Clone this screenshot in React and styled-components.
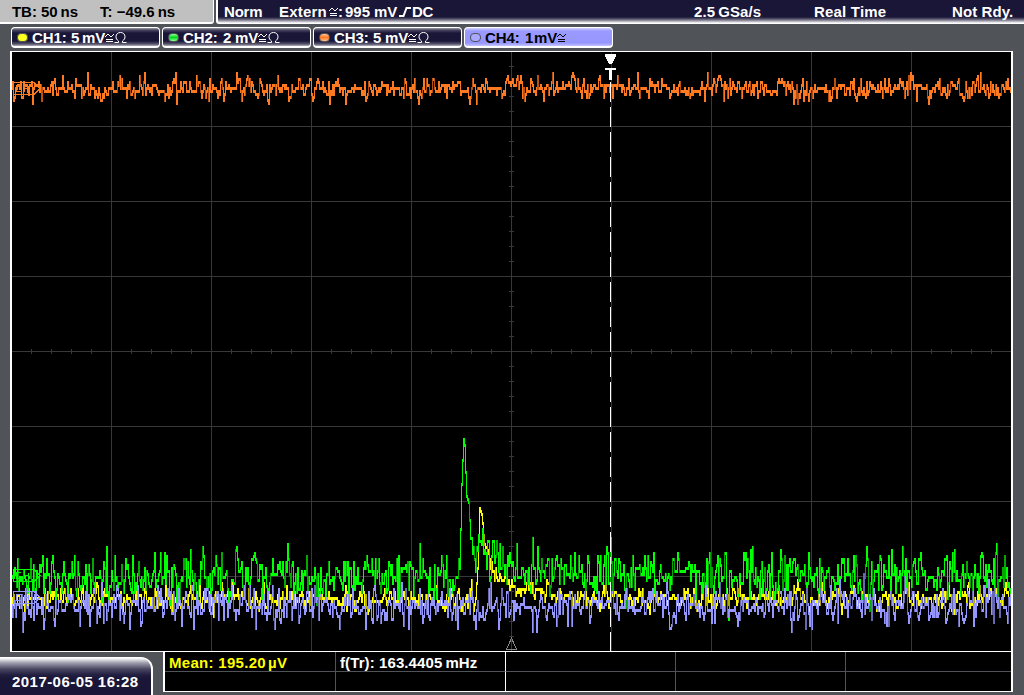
import React from 'react';
import styled, { createGlobalStyle } from 'styled-components';

const Global = createGlobalStyle`
  * { box-sizing: border-box; }
  html, body { margin: 0; padding: 0; background: #505357; overflow: hidden; }
`;

const Screen = styled.div`
  width: 1024px;
  height: 695px;
  display: flex;
  flex-direction: column;
  background: #505357;
  color: #fff;
  font: bold 15px/18px 'Liberation Sans', Arial, sans-serif;
  overflow: hidden;
`;

const TopBar = styled.header`
  display: flex;
  height: 24px;
  flex: none;
`;

const TimeBase = styled.div`
  width: 214px;
  margin-right: 2px;
  background: #c0c0c0;
  color: #000;
  border-right: 1px solid #fff;
  border-bottom: 2px solid #fff;
  border-radius: 0 0 3px 0;
  display: flex;
  padding: 3px 0 0 12px;
`;

const Status = styled.div`
  flex: 1;
  display: flex;
  padding: 3px 0 0 6px;
  border-left: 2px solid #fff;
  border-bottom: 1px solid #fff;
  border-radius: 0 0 0 3px;
  background: linear-gradient(#1a1638 0, #1a1638 17px, #55526a 19px, #a5a3b0 21px, #fff 23px);
`;

const Label = styled.span`
  display: block;
  flex: none;
  width: ${p => (p.$w ? `${p.$w}px` : 'auto')};
  letter-spacing: ${p => p.$ls || 0}px;
  white-space: pre;
`;

const Thin = styled.span`
  margin-left: ${p => p.$gap || 3}px;
`;

const Glyph = styled.svg`
  display: block;
  flex: none;
  margin-right: ${p => p.$gap || 0}px;
`;

const Channels = styled.nav`
  display: flex;
  gap: 2px;
  padding: 3px 0 0 11px;
  height: 27px;
  flex: none;
`;

const Channel = styled.div`
  width: 149px;
  height: 21px;
  display: flex;
  align-items: flex-start;
  padding: 1px 0 0 5px;
  border: 1px solid #fff;
  border-bottom-width: 2px;
  border-radius: 4px;
  color: ${p => (p.$active ? '#000' : '#fff')};
  background: ${p => (p.$active
    ? 'linear-gradient(#d2d2ff 0, #9a9aff 3px, #9696ff 15px, #c4c4ff 18px)'
    : 'linear-gradient(#a09fac 0, #4a4763 2px, #1a1638 5px, #1a1638 13px, #57546d 16px, #b5b3be 18px)')};
`;

const Dot = styled.i`
  width: 11px;
  height: 9px;
  margin: 4px 4px 0 0;
  border-radius: 4px;
  border: 1px solid #505357;
  background: ${p => p.$c};
`;

const Plot = styled.main`
  width: 1003px;
  height: 601px;
  margin-left: 10px;
  border: solid #fff;
  border-width: 1px 2px;
  background: #000;
  flex: none;
  svg { display: block; }
`;

const Footer = styled.footer`
  display: flex;
  height: 43px;
  flex: none;
`;

const Clock = styled.div`
  width: 153px;
  height: 38px;
  margin-top: 5px;
  padding: 15px 0 0 12px;
  border-right: 2px solid #fff;
  border-top: 1px solid #fff;
  border-radius: 0 12px 0 0;
  background: linear-gradient(#fff 0, #9e9cab 5px, #4a4763 11px, #221e40 17px, #1a1638 21px);
`;

const Measures = styled.div`
  width: 850px;
  height: 40px;
  margin-left: 10px;
  display: grid;
  grid-template-columns: 171px 170px 170px 170px 1fr;
  grid-template-rows: 20px 1fr;
  background: #000;
  border: 2px solid #fff;
  border-top: 0;
  border-bottom-width: 1px;
`;

const Cell = styled.div`
  padding: 2px 0 0 4px;
  border-right: ${p => (p.$last ? 0 : 1)}px solid ${p => (p.$strong ? '#fff' : '#505357')};
  border-bottom: ${p => (p.$top ? 1 : 0)}px solid #505357;
  color: ${p => p.$c || '#fff'};
`;

const Coupling = ({ gap }) => (
  <Glyph $gap={gap} width="9" height="18" fill="none" stroke="currentColor" shapeRendering="crispEdges">
    <path d="M0 7.5H1M1 6.5H2M2 5.5H4M4 6.5H5M5 7.5H7M7 6.5H8M8 5.5H9M1 10.5H8M1 12.5H8" />
  </Glyph>
);

const Omega = () => (
  <Glyph width="13" height="18" fill="none" stroke="currentColor">
    <path d="M0.5 13.5H4.5V12C2.8 10.8 2 9.5 2 7.8C2 5 4 3.5 6.5 3.5S11 5 11 7.8C11 9.5 10.2 10.8 8.5 12V13.5H12.5" />
  </Glyph>
);

const Rising = () => (
  <Glyph $gap={1} width="12" height="18" fill="none" stroke="currentColor" strokeWidth="2">
    <path d="M0 13H4.5L7.5 5H12" />
  </Glyph>
);

function rng(seed) {
  let s = seed;
  return () => {
    s = (s * 1664525 + 1013904223) >>> 0;
    return s / 4294967296;
  };
}

function pulse(x, points) {
  if (x <= points[0][0] || x >= points[points.length - 1][0]) return 0;
  const i = points.findIndex(p => p[0] > x);
  const [x0, y0] = points[i - 1];
  const [x1, y1] = points[i];
  return y0 + ((y1 - y0) * (x - x0)) / (x1 - x0);
}

function makeTrace({ seed, base, amp, shape, spikes = {}, quiet = [0, 0] }) {
  const r = rng(seed);
  const paths = ['', ''];
  let previous = base;
  let deviation = 0;
  for (let x = 12; x < 1011; x += 1) {
    const inQuiet = x > quiet[0] && x < quiet[1];
    const settled = Math.abs(deviation) < amp * 0.4;
    if (!settled || r() > 0.25) {
      const g = (r() + r() + r() + r() - 2) * 1.08;
      deviation = g * amp * (inQuiet ? 0.2 : 1) + deviation * 0.22;
    }
    const y = spikes[x] || base + deviation - (shape ? pulse(x, shape) : 0);
    const v = Math.round(y / 3) * 3;
    const low = Math.min(previous, v);
    const high = Math.max(previous, v);
    previous = v;
    const n = high - low > 6 && r() > 0.7 ? 1 : 0;
    paths[n] += `M${x} ${low}h1v${high - low + 3}h-1z`;
  }
  return paths;
}

const traces = [
  { color: '#ffff00', dim: '#b0a800', seed: 41, base: 597, amp: 9, quiet: [475, 490],
    shape: [[475, 0], [477, 30], [479, 88], [481, 82], [484, 55], [488, 45], [491, 28], [497, 19], [510, 13], [530, 7], [570, 3], [590, 0]] },
  { color: '#00ff00', dim: '#00a800', seed: 77, base: 575, amp: 19, quiet: [459, 472],
    spikes: { 42: 556, 74: 556, 106: 547, 132: 556, 160: 553, 164: 553, 203: 556, 446: 556, 493: 541, 516: 544, 537: 547, 574: 553, 784: 556, 794: 559, 819: 559, 891: 550, 920: 553, 952: 553, 980: 556 },
    shape: [[459, 0], [461, 90], [463, 135], [464, 135], [466, 84], [468, 73], [470, 40], [478, 36], [484, 22], [500, 15], [530, 10], [570, 3], [600, 0]] },
  { color: '#9696ff', dim: '#6868b0', seed: 139, base: 604, amp: 15,
    spikes: { 22: 629, 43: 626, 193: 626, 457: 626, 536: 629, 556: 623, 811: 626, 837: 620, 888: 623, 958: 623, 863: 572, 904: 575 } },
  { color: '#ff7920', dim: '#b95010', seed: 201, base: 87, amp: 8.5,
    spikes: { 32: 102, 144: 73, 176: 102, 345: 102, 476: 102, 617: 76, 707: 73, 793: 102, 797: 102, 910: 73, 980: 73 } },
].map(t => ({ ...t, paths: makeTrace(t) }));

const vertical = Array.from({ length: 9 }, (_, i) => 111 + i * 100);
const horizontal = Array.from({ length: 7 }, (_, i) => 126 + i * 75);
const ticksX = Array.from({ length: 49 }, (_, i) => 31 + i * 20);
const ticksY = Array.from({ length: 39 }, (_, i) => 66 + i * 15);

const Waveforms = () => (
  <svg width="999" height="599" viewBox="12 52 999 599" shapeRendering="crispEdges">
    <g fill="#383838">
      {vertical.map(x => <rect key={x} x={x} y="52" width="1" height="599" />)}
      {horizontal.map(y => <rect key={y} x="12" y={y} width="999" height="1" />)}
      {ticksX.map(x => <rect key={x} x={x} y="349" width="1" height="5" />)}
      {ticksY.map(y => <rect key={y} x="509" y={y} width="5" height="1" />)}
    </g>
    {traces.map(t => (
      <g key={t.color}>
        <path d={t.paths[0]} fill={t.color} />
        <path d={t.paths[1]} fill={t.dim} />
      </g>
    ))}
    <path d="M610.5 82V651" stroke="#fff" strokeDasharray="20 5" />
    {[[82, '#ff7920'], [569, '#00ff00'], [591, '#9696ff']].map(([y, c]) => (
      <path key={y} d={`M13 ${y + 0.5}H34L40 ${y + 6.5}L34 ${y + 12.5}H13ZM21 ${y + 3.5}H16V${y + 9.5}H21M24 ${y + 3.5}V${y + 9.5}M28 ${y + 3.5}V${y + 9.5}M24 ${y + 6.5}H28`} fill="none" stroke={c} />
    ))}
    <path d="M605 54H616V56L612 64H609L605 56ZM605 68H616V70H612V80H609V70H605Z" fill="#fff" />
    <path d="M511.5 638L506.5 649.5H516.5Z" fill="none" stroke="#888" />
  </svg>
);

const channels = [
  { name: 'CH1:', value: '5', color: '#ffff20', nameWidth: 39, valueWidth: 11 },
  { name: 'CH2:', value: '2', color: 'linear-gradient(#8fff8f,#00d820 50%,#8fff8f)', nameWidth: 40, valueWidth: 12 },
  { name: 'CH3:', value: '5', color: 'linear-gradient(#ffc090,#ff7920 50%,#ffc090)', nameWidth: 39, valueWidth: 12 },
  { name: 'CH4:', value: '1', color: '#a8a8ff', nameWidth: 40, valueWidth: 9 },
];

export default function App() {
  return (
    <>
      <Global />
      <Screen>
        <TopBar>
          <TimeBase>
            <Label $w={88} $ls={-0.05}>TB: 50<Thin>ns</Thin></Label>
            <Label>T: −49.6<Thin>ns</Thin></Label>
          </TimeBase>
          <Status>
            <Label $w={55} $ls={-0.2}>Norm</Label>
            <Label $w={50} $ls={0.2}>Extern</Label>
            <Coupling />
            <Label $w={7}>:</Label>
            <Label $w={54}>995<Thin $gap={4}>mV</Thin></Label>
            <Rising />
            <Label $w={282} $ls={-0.3}>DC</Label>
            <Label $w={120} $ls={0.1}>2.5<Thin>GSa/s</Thin></Label>
            <Label $w={138} $ls={0.2}>Real Time</Label>
            <Label $ls={0.1}>Not Rdy.</Label>
          </Status>
        </TopBar>
        <Channels>
          {channels.map((c, i) => (
            <Channel key={c.name} $active={i === 3}>
              <Dot $c={c.color} />
              <Label $w={c.nameWidth} $ls={-0.1}>{c.name}</Label>
              <Label $w={c.valueWidth}>{c.value}</Label>
              <Label $w={23}>mV</Label>
              <Coupling />
              {i < 3 && <Omega />}
            </Channel>
          ))}
        </Channels>
        <Plot><Waveforms /></Plot>
        <Footer>
          <Clock><Label $ls={0.45}>2017-06-05 16:28</Label></Clock>
          <Measures>
            <Cell $top $c="#ff0"><Label $ls={0.3}>Mean: 195.20<Thin $gap={2}>µV</Thin></Label></Cell>
            <Cell $top $strong><Label $ls={0.1}>f(Tr): 163.4405<Thin>mHz</Thin></Label></Cell>
            <Cell $top /><Cell $top /><Cell $top $last />
            <Cell /><Cell $strong /><Cell /><Cell /><Cell $last />
          </Measures>
        </Footer>
      </Screen>
    </>
  );
}
